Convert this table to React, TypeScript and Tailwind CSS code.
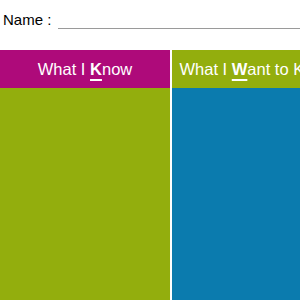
export default function App() {
  const columns = [
    { pre: "What I ", key: "K", post: "now", head: "bg-[#ae0a7a]", body: "bg-[#93ae0d]" },
    { pre: "What I ", key: "W", post: "ant to Know", head: "bg-[#93ae0d]", body: "bg-[#0b7bae]" },
    { pre: "What I ", key: "L", post: "earned", head: "bg-[#0b7bae]", body: "bg-[#ae0a7a]" },
  ];

  return (
    <div className="w-[300px] h-[300px] overflow-hidden bg-white font-['Liberation_Sans',Arial,sans-serif]">
      <div className="flex items-end h-[30px] pl-[3px]">
        <span className="shrink-0 whitespace-nowrap text-[15px] leading-none text-black pb-[3px]">Name :</span>
        <div className="shrink-0 ml-[7px] w-[400px] border-b border-[#9a9a9a] mb-[1px]" />
      </div>

      {/* KWL chart */}
      <div className="mt-[20px] flex gap-[2px] w-[520px]">
        {columns.map((c) => (
          <div key={c.key} className="w-[170px] shrink-0 flex flex-col">
            <div className={`${c.head} h-[38px] flex items-center justify-center text-white`}>
              <span className="text-[16.5px] whitespace-pre">
                {c.pre}
                <span className="font-bold underline underline-offset-[4px] decoration-[1.5px]">{c.key}</span>
                {c.post}
              </span>
            </div>
            <div className={`${c.body} h-[220px]`} />
          </div>
        ))}
      </div>
    </div>
  );
}
